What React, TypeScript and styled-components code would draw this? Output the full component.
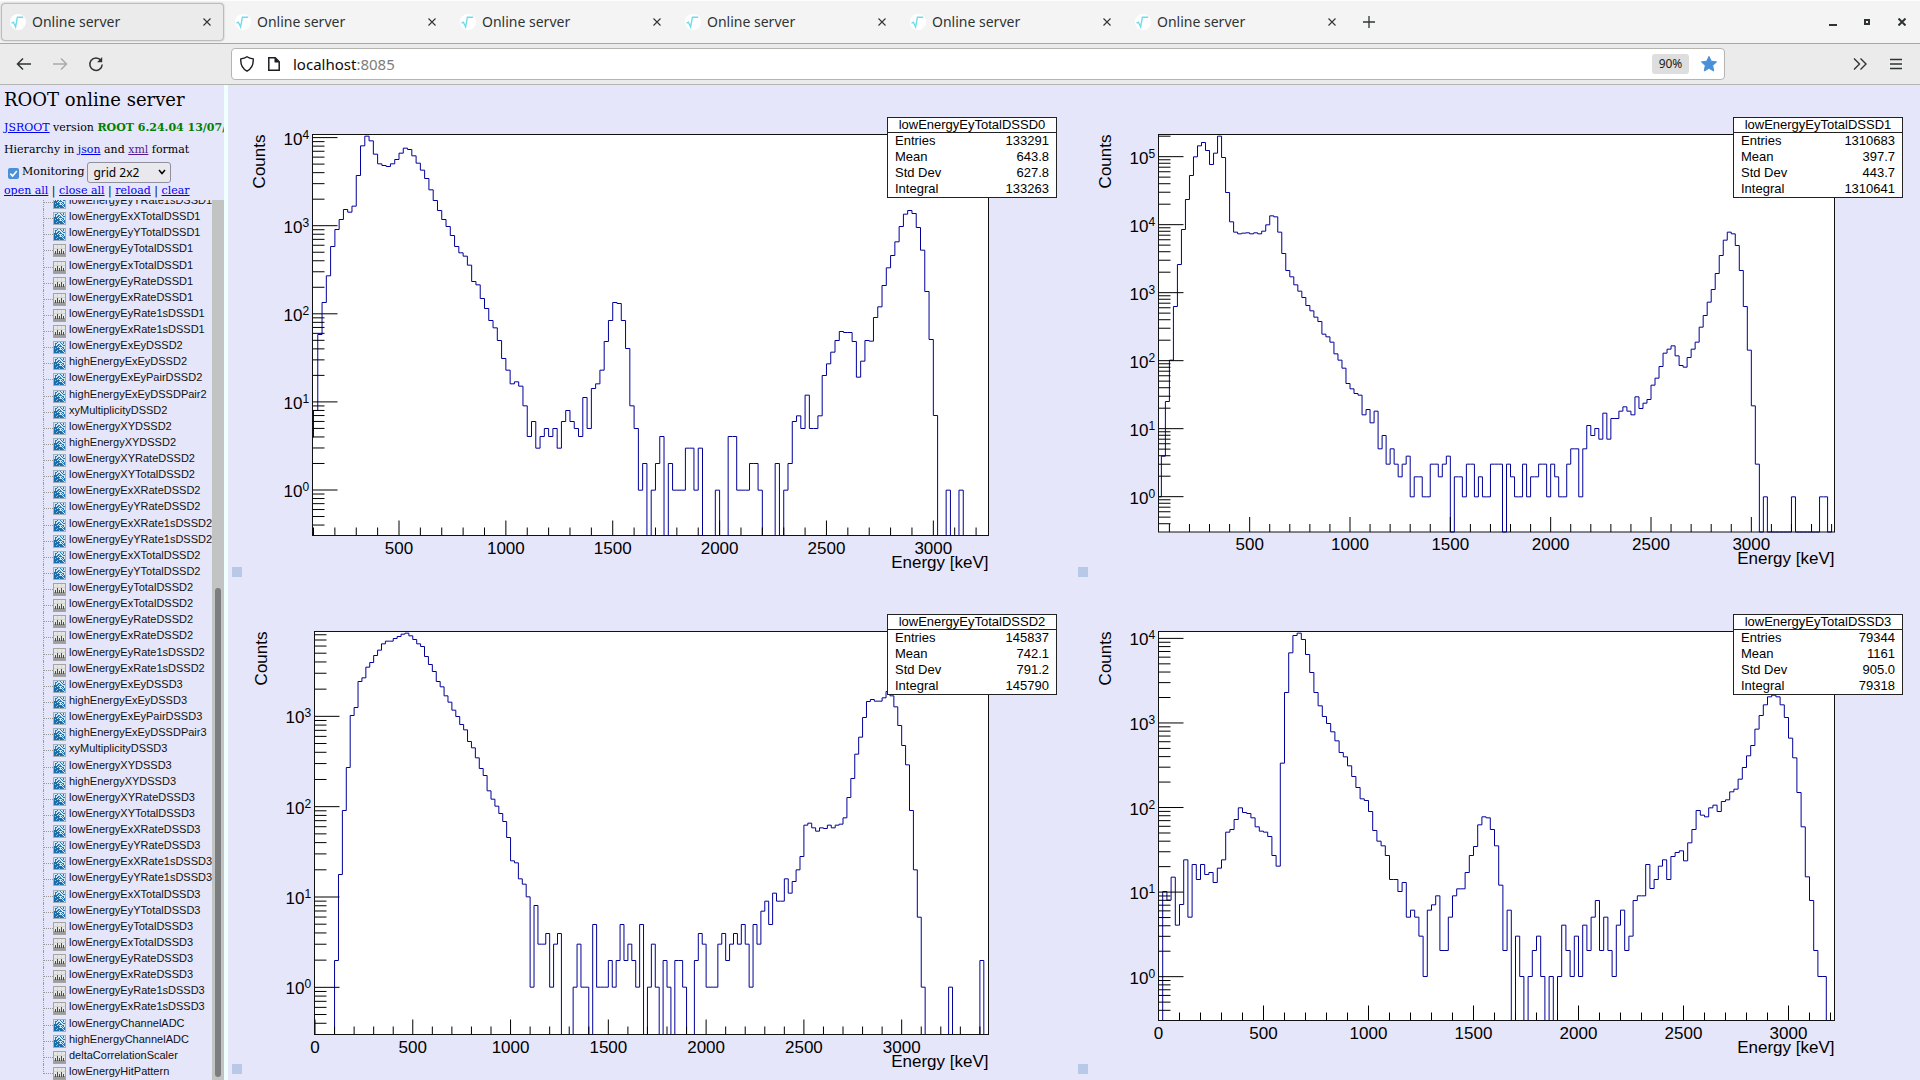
import React from "react";
import styled, { createGlobalStyle } from "styled-components";

const GlobalStyle = createGlobalStyle`
  html, body, #root { height: 100%; }
  body { margin: 0; background: #e6e6fa; overflow: hidden; }
  * { box-sizing: border-box; }
`;

const UI_FONT = `"Noto Sans", "Open Sans", sans-serif`;
const PLOT_FONT = `"Liberation Sans", Arial, sans-serif`;
const PAGE_FONT = `"DejaVu Serif", serif`;

/* ---------- browser chrome ---------- */

const Window = styled.div`
  display: flex;
  flex-direction: column;
  height: 100vh;
  font-family: ${UI_FONT};
  color: #2e3436;
`;

const TabBar = styled.div`
  display: flex;
  align-items: center;
  height: 44px;
  flex: none;
  background: #f4f4f4;
  border-top: 1px solid #fdfdfd;
  border-bottom: 1px solid #a8a8a6;
`;

const TabItem = styled.div<{ $active?: boolean }>`
  display: flex;
  align-items: center;
  gap: 6px;
  width: 223px;
  height: 38px;
  margin-left: 1px;
  margin-right: 1px;
  padding: 0 9px 0 8px;
  border-radius: 4px;
  border: 1px solid ${(p) => (p.$active ? "#bcbcc0" : "transparent")};
  background: ${(p) => (p.$active ? "#ebebeb" : "transparent")};
  box-shadow: ${(p) => (p.$active ? "0 0 2px #b4b4b8" : "none")};
`;

const TabTitle = styled.span`
  flex: 1;
  font-size: 14px;
  line-height: 20px;
`;

const IconButton = styled.button<{ $w?: number }>`
  display: flex;
  align-items: center;
  justify-content: center;
  width: ${(p) => p.$w ?? 36}px;
  height: 32px;
  padding: 0;
  border: 0;
  background: none;
  color: inherit;
`;

const WindowControls = styled.div`
  display: flex;
  margin-left: auto;
`;

const NavBar = styled.div`
  display: flex;
  align-items: center;
  height: 41px;
  flex: none;
  padding: 0 6px;
  background: #ebebeb;
  border-bottom: 1px solid #b4b4b0;
`;

const UrlBox = styled.div`
  display: flex;
  align-items: center;
  flex: 1;
  max-width: 1494px;
  height: 32px;
  padding: 0 7px;
  border: 1px solid #b4b4b0;
  border-radius: 4px;
  background: #fff;
`;

const NavButtons = styled.div`
  display: flex;
  width: 225px;
  flex: none;
`;

const Address = styled.div`
  flex: 1;
  margin-left: 13px;
  font-size: 15px;
  line-height: 24px;
  color: #7d7d7d;
  strong { font-weight: 400; color: #0c0c0d; }
`;

const DocIcon = styled.svg`
  margin-left: 13px;
`;

const ZoomBadge = styled.button`
  width: 37px;
  height: 20px;
  margin-right: 12px;
  padding: 0;
  border: 0;
  border-radius: 3px;
  background: #dedede;
  color: #1c1c1c;
  font-family: ${UI_FONT};
  font-size: 12px;
  line-height: 20px;
`;

const NavEnd = styled.div`
  display: flex;
  margin-left: auto;
`;

const Favicon = () => (
  <svg width="16" height="16" viewBox="0 0 16 16" aria-hidden="true">
    <circle cx="8" cy="8" r="8" fill="#fff" />
    <path d="M1.5 9.2 L3.4 8.3 L5.6 13 L7.4 3.2 L13.2 3.2" fill="none" stroke="#6fdcee" strokeWidth="1.4" />
  </svg>
);

const CloseGlyph = () => (
  <svg width="8" height="8" viewBox="0 0 8 8" aria-hidden="true">
    <path d="M.5 .5L7.500 7.500M7.500 .5L.5 7.500" stroke="#2e3436" strokeWidth="1.1" />
  </svg>
);

/* ---------- page ---------- */

const Page = styled.div`
  display: flex;
  flex: 1;
  min-height: 0;
  background: #e6e6fa;
  color: #000;
`;

const Sidebar = styled.aside`
  display: flex;
  flex-direction: column;
  width: 224px;
  flex: none;
  overflow: hidden;
  font-family: ${PAGE_FONT};
  font-size: 11px;
  line-height: 16px;
`;

const SidebarHead = styled.div`
  padding: 0 0 1px 4px;
  white-space: nowrap;
  a { color: #0000ee; }
`;

const Title = styled.h1`
  margin: 0;
  font-size: 18px;
  font-weight: 400;
  line-height: 30px;
`;

const Version = styled.p`
  margin: 5px 0 6px;
  b { color: #008000; }
`;

const Formats = styled.p`
  margin: 0 0 3px;
  a + a { color: #551a8b; }
`;

const Controls = styled.div`
  display: flex;
  align-items: center;
  height: 22px;
  padding-left: 4px;
`;

const Tick = styled.input`
  appearance: none;
  width: 11px;
  height: 11px;
  margin: 3px 3px 0 0;
  border-radius: 2px;
  background: #4a90d9
    url("data:image/svg+xml,%3Csvg xmlns='http://www.w3.org/2000/svg' viewBox='0 0 11 11'%3E%3Cpath d='M2.300 5.600L4.600 8L8.800 3' fill='none' stroke='white' stroke-width='1.600'/%3E%3C/svg%3E");
`;

const LayoutSelect = styled.select`
  appearance: none;
  width: 84px;
  height: 21px;
  margin-left: 3px;
  padding: 0 5px;
  border: 1px solid #8f8f9d;
  border-radius: 3px;
  background: #e9e9ed
    url("data:image/svg+xml,%3Csvg xmlns='http://www.w3.org/2000/svg' viewBox='0 0 8 6'%3E%3Cpath d='M1 1L4 4.500L7 1' fill='none' stroke='black' stroke-width='1.500'/%3E%3C/svg%3E")
    right 4px center / 8px 6px no-repeat;
  color: #000;
  font-family: ${UI_FONT};
  font-size: 12px;
`;

const TreeArea = styled.div`
  display: flex;
  flex: 1;
  min-height: 0;
`;

const TreeClip = styled.div`
  display: flex;
  align-items: flex-end;
  flex: 1;
  min-width: 0;
  overflow: hidden;
`;

const Tree = styled.ul`
  display: grid;
  grid-auto-rows: 1fr;
  width: 100%;
  height: 887px;
  flex: none;
  margin: 0;
  padding: 0 0 0 43px;
  list-style: none;
`;

const TreeRow = styled.li`
  display: flex;
  align-items: center;
  min-height: 0;
  svg { flex: none; margin-top: 3px; }
  a {
    margin-left: 3px;
    padding-bottom: 1px;
    color: #111;
    font-family: ${PLOT_FONT};
    font-size: 11px;
    line-height: 15px;
    white-space: nowrap;
    text-decoration: none;
  }
`;

const Branch = styled.span<{ $last: boolean }>`
  display: flex;
  align-items: ${(p) => (p.$last ? "flex-end" : "center")};
  align-self: ${(p) => (p.$last ? "flex-start" : "stretch")};
  height: ${(p) => (p.$last ? "60%" : "auto")};
  width: 10px;
  border-left: 1px dotted #999;
  &::after {
    content: "";
    flex: 1;
    margin-top: 3px;
    border-top: 1px dotted #999;
  }
`;

const ScrollTrack = styled.div`
  display: flex;
  flex-direction: column;
  justify-content: flex-end;
  width: 12px;
  padding: 3px;
  background: #c1c4c2;
`;

const ScrollThumb = styled.div`
  height: 56%;
  border-radius: 3px;
  background: #7b7d7e;
`;

const Splitter = styled.div`
  width: 4px;
  flex: none;
  background: #f0ffff;
`;

const PadGrid = styled.main`
  display: grid;
  grid-template: 1fr 1fr / 1fr 1fr;
  flex: 1;
  min-width: 0;
  padding-bottom: 1px;
`;

const Pad = styled.section`
  position: relative;
  min-width: 0;
  min-height: 0;
`;

const PadDrawing = styled.svg`
  display: block;
  width: 100%;
  height: 100%;
  font-family: ${PLOT_FONT};
  font-size: 17px;
`;

const StatsBox = styled.table`
  position: absolute;
  top: 32px;
  right: 17px;
  width: 170px;
  border: 1px solid #222;
  border-spacing: 0;
  background: #fff;
  font-family: ${PLOT_FONT};
  font-size: 13px;
  line-height: 15px;
  th { padding: 0 0 1px 7px; font-weight: 400; text-align: left; }
  td { padding: 0 7px 1px 0; text-align: right; }
  thead th {
    padding: 0;
    border-bottom: 1px solid #222;
    line-height: 14px;
    text-align: center;
  }
`;

/* ---------- tree ---------- */

const HistIcon1D = () => (
  <svg width="13" height="13" viewBox="0 0 13 13" aria-hidden="true">
    <rect x=".5" y=".5" width="12" height="12" fill="#e6e6e3" stroke="#a4a4a2" />
    <path d="M1 4.500H12M4.500 1V12M8.500 1V12" stroke="#d4d4d4" />
    <rect x="1" y="9" width="11" height="3" fill="#9c9c9c" />
    <path d="M2.500 10V7M4.500 10V5M6.500 10V7M8.500 10V5M10.500 10V7" stroke="#4c4c4c" strokeWidth="1" />
  </svg>
);

const HistIcon2D = () => (
  <svg width="13" height="13" viewBox="0 0 13 13" aria-hidden="true">
    <rect x=".5" y=".5" width="12" height="12" fill="#d4e8f4" stroke="#9fb0ba" />
    <path d="M1 5H4V7H7V9H9V12H1Z" fill="#1c6ea8" />
    <path
      d="M2 2.500H4M5 3.500H7M8 2.500H9M10 2.500H11M2 3.500H3M4 1.500H5M7 1.500H8M10 1.500H11M9 3.500H10M4 4.500H6M7 4.500H8M4 5.500H5M6 5.500H9M10 4.500H12M5 6.500H6M9 6.500H11M8 7.500H9M10 7.500H11M9 8.500H10M11 8.500H12M10 9.500H12M9 10.500H10M11 10.500H12M9 11.500H11M2 4.500H3"
      stroke="#2878b0"
    />
    <path d="M2 7.500H3M4 9.500H5M6 8.500H7M3 10.500H4M6 11.500H7" stroke="#8fc3e4" />
  </svg>
);

type Leaf = { name: string; twoD: boolean };

const two = (name: string): Leaf => ({ name, twoD: true });
const one = (name: string): Leaf => ({ name, twoD: false });

const totalsAndRates = (n: number): Leaf[] => [
  two(`lowEnergyExXTotalDSSD${n}`),
  two(`lowEnergyEyYTotalDSSD${n}`),
  one(`lowEnergyEyTotalDSSD${n}`),
  one(`lowEnergyExTotalDSSD${n}`),
  one(`lowEnergyEyRateDSSD${n}`),
  one(`lowEnergyExRateDSSD${n}`),
  one(`lowEnergyEyRate1sDSSD${n}`),
  one(`lowEnergyExRate1sDSSD${n}`),
];

const detector = (n: number): Leaf[] => [
  two(`lowEnergyExEyDSSD${n}`),
  two(`highEnergyExEyDSSD${n}`),
  two(`lowEnergyExEyPairDSSD${n}`),
  two(`highEnergyExEyDSSDPair${n}`),
  two(`xyMultiplicityDSSD${n}`),
  two(`lowEnergyXYDSSD${n}`),
  two(`highEnergyXYDSSD${n}`),
  two(`lowEnergyXYRateDSSD${n}`),
  two(`lowEnergyXYTotalDSSD${n}`),
  two(`lowEnergyExXRateDSSD${n}`),
  two(`lowEnergyEyYRateDSSD${n}`),
  two(`lowEnergyExXRate1sDSSD${n}`),
  two(`lowEnergyEyYRate1sDSSD${n}`),
  ...totalsAndRates(n),
];

const leaves: Leaf[] = [
  two("lowEnergyEyYRate1sDSSD1"),
  ...totalsAndRates(1),
  ...detector(2),
  ...detector(3),
  two("lowEnergyChannelADC"),
  two("highEnergyChannelADC"),
  one("deltaCorrelationScaler"),
  one("lowEnergyHitPattern"),
];

/* ---------- histograms ---------- */

type Hist = {
  name: string;
  stats: [string, string][];
  frame: { left: number; right: number; top: number; bottom: number };
  /* position of 0 keV and width of 1 keV */
  x0: number;
  perKeV: number;
  firstLabel: number;
  /* position of one count and height of a decade */
  y0: number;
  decade: number;
  /* left edge of the first bin; every bin is 20 keV wide */
  start: number;
  /* bin tops in thirds of a unit below originY; 0 is an empty bin */
  originY: number;
  tops: number[];
};

const hists: Hist[] = [
  {
    name: "lowEnergyEyTotalDSSD0",
    stats: [["Entries", "133291"], ["Mean", "643.8"], ["Std Dev", "627.8"], ["Integral", "133263"]],
    frame: { left: 84.5, right: 760.5, top: 49.5, bottom: 450.5 },
    x0: 64.13, perKeV: 0.213733, firstLabel: 500, y0: 405, decade: 88.1, start: 80, originY: 25,
    tops: [
      981, 901, 673, 577, 497, 409, 358, 328, 298, 306, 288, 196, 107, 78, 92, 132, 161, 166, 169, 161, 148,
      129, 114, 118, 137, 159, 180, 205, 239, 271, 301, 328, 349, 376, 409, 428, 438, 465, 514, 524, 565,
      595, 631, 653, 691, 745, 780, 821, 815, 828, 887, 979, 934, 1014, 979, 955, 979, 955, 1014, 934, 901,
      934, 955, 979, 862, 955, 835, 821, 780, 694, 631, 577, 580, 631, 715, 887, 955, 1140, 1060, 0, 1140,
      1060, 979, 0, 1060, 1140, 1140, 1140, 1014, 1014, 1140, 1014, 0, 0, 0, 1140, 0, 0, 979, 979, 1140, 1140,
      1140, 1060, 1060, 1140, 0, 0, 0, 1060, 0, 1140, 1060, 934, 917, 955, 855, 955, 955, 917, 796, 761, 726,
      691, 664, 667, 667, 694, 801, 753, 691, 693, 622, 590, 526, 473, 436, 395, 349, 312, 301, 310, 352,
      420, 544, 688, 916, 0, 0, 1140, 0, 0, 1140, 0,
    ],
  },
  {
    name: "lowEnergyEyTotalDSSD1",
    stats: [["Entries", "1310683"], ["Mean", "397.7"], ["Std Dev", "443.7"], ["Integral", "1310641"]],
    frame: { left: 84.5, right: 760.5, top: 49.5, bottom: 447 },
    x0: 75.33, perKeV: 0.200667, firstLabel: 500, y0: 411.67, decade: 68, start: 40, originY: 25,
    tops: [
      1160, 1038, 874, 750, 589, 463, 358, 268, 196, 140, 107, 97, 121, 163, 129, 78, 142, 247, 335, 366, 371,
      369, 368, 371, 368, 371, 363, 344, 317, 320, 366, 430, 481, 500, 524, 543, 562, 586, 602, 621, 634, 672,
      680, 696, 731, 750, 774, 820, 836, 850, 855, 914, 898, 938, 903, 1016, 976, 1062, 1016, 1062, 1100, 1062,
      1038, 1160, 1100, 1100, 1160, 1160, 1062, 1062, 1100, 1062, 1038, 0, 1100, 1100, 1160, 1062, 1062, 1160,
      1100, 1160, 1160, 1062, 1062, 1062, 0, 1062, 1100, 1160, 1160, 1062, 1160, 1100, 1100, 1062, 1062, 1160,
      1062, 1100, 1160, 1160, 1062, 1016, 1016, 1160, 1016, 946, 976, 955, 987, 909, 987, 925, 925, 903, 890,
      903, 914, 860, 895, 879, 868, 825, 804, 769, 729, 717, 707, 737, 766, 771, 742, 717, 696, 651, 616, 576,
      538, 490, 436, 390, 366, 371, 406, 481, 589, 720, 887, 1062, 0, 1160, 0, 0, 0, 0, 0, 0, 1160, 0, 0, 0, 0,
      0, 0, 1160, 1160, 0,
    ],
  },
  {
    name: "lowEnergyEyTotalDSSD2",
    stats: [["Entries", "145837"], ["Mean", "742.1"], ["Std Dev", "791.2"], ["Integral", "145790"]],
    frame: { left: 86.5, right: 760.5, top: 49.5, bottom: 452.5 },
    x0: 87, perKeV: 0.19556, firstLabel: 0, y0: 405.33, decade: 90.33, start: 0, originY: 18,
    tops: [
      0, 0, 0, 0, 0, 1081, 823, 631, 502, 346, 322, 244, 233, 201, 187, 166, 150, 131, 123, 123, 115, 109, 102,
      99, 107, 118, 131, 139, 169, 193, 214, 244, 260, 287, 306, 330, 349, 373, 389, 424, 443, 473, 505, 526,
      572, 597, 618, 640, 664, 712, 782, 788, 836, 852, 890, 1161, 916, 1032, 1032, 1000, 1161, 1032, 1000, 0,
      0, 0, 1161, 1032, 1161, 1161, 0, 973, 1161, 1161, 1161, 1081, 1161, 1081, 973, 1081, 1032, 1081, 1161,
      973, 0, 1161, 1032, 1161, 0, 1081, 1161, 0, 1081, 1081, 1161, 0, 0, 1081, 1000, 1032, 1161, 1161, 1161,
      1032, 1000, 1081, 1032, 1000, 1032, 973, 1032, 1161, 973, 1032, 933, 903, 973, 879, 903, 903, 836, 879,
      844, 809, 769, 675, 669, 683, 693, 683, 685, 675, 683, 675, 672, 653, 592, 535, 462, 411, 352, 304, 298,
      303, 303, 293, 274, 287, 320, 376, 436, 494, 631, 809, 951, 1161, 0, 0, 0, 0, 0, 0, 1161, 0, 0, 0, 0, 0,
      0, 0, 1081, 0,
    ],
  },
  {
    name: "lowEnergyEyTotalDSSD3",
    stats: [["Entries", "79344"], ["Mean", "1161"], ["Std Dev", "905.0"], ["Integral", "79318"]],
    frame: { left: 84.5, right: 760.5, top: 49.5, bottom: 438.5 },
    x0: 84.5, perKeV: 0.21, firstLabel: 0, y0: 394.67, decade: 84.57, start: 0, originY: 18,
    tops: [
      0, 874, 900, 831, 975, 913, 779, 951, 793, 838, 793, 823, 817, 847, 804, 779, 696, 688, 658, 623, 637, 640,
      653, 680, 693, 696, 709, 766, 798, 489, 277, 158, 106, 99, 118, 163, 217, 277, 317, 349, 370, 395, 422,
      457, 470, 497, 529, 562, 596, 601, 634, 691, 723, 737, 766, 838, 838, 874, 847, 951, 930, 951, 1008, 1129,
      930, 914, 887, 1051, 1051, 951, 887, 866, 866, 817, 766, 739, 674, 650, 653, 688, 737, 855, 1051, 930, 0,
      1008, 1129, 0, 1129, 1051, 1008, 1129, 0, 1129, 0, 1129, 975, 1051, 1129, 1008, 1129, 975, 1051, 951, 901,
      1051, 951, 1051, 1129, 975, 930, 1051, 1008, 901, 887, 887, 793, 865, 838, 798, 779, 838, 769, 757, 752,
      782, 728, 688, 631, 645, 650, 623, 615, 634, 604, 599, 575, 567, 537, 502, 467, 436, 387, 346, 314, 290,
      285, 290, 314, 352, 414, 473, 577, 680, 830, 901, 1051, 1129, 1129, 0,
    ],
  },
];

function tracePath(h: Hist) {
  const { left, bottom } = h.frame;
  const xAt = (e: number) => Math.max(left, h.x0 + e * h.perKeV).toFixed(2);
  const yAt = (t: number) => (t === 0 ? bottom : h.originY + (t + 0.5) / 3).toFixed(2);
  let d = `M${xAt(h.start)} ${yAt(h.tops[0])}`;
  h.tops.forEach((t, i) => {
    d += `V${yAt(t)}H${xAt(h.start + 20 * (i + 1))}`;
  });
  return d;
}

function axisTicks(h: Hist) {
  const { left, right, top, bottom } = h.frame;
  let d = "";
  for (let e = 0; e <= 3500; e += 100) {
    const x = h.x0 + e * h.perKeV;
    if (x < left - 1 || x > right) continue;
    d += `M${x.toFixed(2)} ${bottom}v${e % 500 === 0 ? -15 : -8}`;
  }
  const exponents: { p: number; y: number }[] = [];
  for (let p = -1; p <= 5; p++) {
    for (let m = 1; m < 10; m++) {
      const y = h.y0 - h.decade * (p + Math.log10(m));
      if (y < top || y > bottom) continue;
      d += `M${left} ${y.toFixed(2)}h${m === 1 ? 25 : 12}`;
      if (m === 1) exponents.push({ p, y });
    }
  }
  return { d, exponents };
}

function HistPad({ hist }: { hist: Hist }) {
  const { left, right, top, bottom } = hist.frame;
  const { d, exponents } = axisTicks(hist);
  const labels: number[] = [];
  for (let e = hist.firstLabel; e <= 3000; e += 500) labels.push(e);
  return (
    <Pad>
      <PadDrawing viewBox="0 0 846 497" preserveAspectRatio="xMaxYMin meet" role="img" aria-label={hist.name}>
        <rect x={left} y={top} width={right - left} height={bottom - top} fill="#fff" />
        <path d={tracePath(hist)} fill="none" stroke="#000099" />
        <path d={d} stroke="#000" />
        <rect x={left} y={top} width={right - left} height={bottom - top} fill="none" stroke="#111" />
        {exponents.map(({ p, y }) => (
          <text key={p} x={left - 29} y={Math.round(y + 7)}>
            10
            <tspan dy="-6" fontSize="12">{p}</tspan>
          </text>
        ))}
        {labels.map((e) => (
          <text key={e} x={hist.x0 + e * hist.perKeV} y={bottom + 18} textAnchor="middle">{e}</text>
        ))}
        <text x={right} y={Math.round(bottom + 32)} textAnchor="end">Energy [keV]</text>
        <text transform={`translate(${left - 48} ${top}) rotate(-90)`} textAnchor="end">Counts</text>
        <rect x="4" y="482" width="10" height="10" fill="#b8c9e8" />
      </PadDrawing>
      <StatsBox>
        <thead>
          <tr><th colSpan={2}>{hist.name}</th></tr>
        </thead>
        <tbody>
          {hist.stats.map(([k, v]) => (
            <tr key={k}><th scope="row">{k}</th><td>{v}</td></tr>
          ))}
        </tbody>
      </StatsBox>
    </Pad>
  );
}

export default function App() {
  return (
    <Window>
      <GlobalStyle />
      <TabBar>
        {[0, 1, 2, 3, 4, 5].map((i) => (
          <TabItem key={i} $active={i === 0}>
            <Favicon />
            <TabTitle>Online server</TabTitle>
            <IconButton $w={14} aria-label="Close tab"><CloseGlyph /></IconButton>
          </TabItem>
        ))}
        <IconButton $w={38} aria-label="New tab">
          <svg width="12" height="12" viewBox="0 0 12 12"><path d="M6 0V12M0 6H12" stroke="#2e3436" strokeWidth="1.3" /></svg>
        </IconButton>
        <WindowControls>
          <IconButton $w={34} aria-label="Minimize">
            <svg width="8" height="8" viewBox="0 0 8 8"><path d="M0 7H8" stroke="#2e3436" strokeWidth="2" /></svg>
          </IconButton>
          <IconButton $w={34} aria-label="Restore">
            <svg width="6" height="6" viewBox="0 0 6 6"><rect x="1" y="1" width="4" height="4" fill="none" stroke="#2e3436" strokeWidth="2" /></svg>
          </IconButton>
          <IconButton $w={36} aria-label="Close window">
            <svg width="8" height="8" viewBox="0 0 8 8"><path d="M.5 .5L7.500 7.500M7.500 .5L.5 7.500" stroke="#2e3436" strokeWidth="2" /></svg>
          </IconButton>
        </WindowControls>
      </TabBar>

      <NavBar>
        <NavButtons>
          <IconButton aria-label="Back">
            <svg width="16" height="14" viewBox="0 0 16 14"><path d="M15 7H1.500M7 1.500L1.500 7L7 12.500" fill="none" stroke="#2e3436" strokeWidth="1.500" /></svg>
          </IconButton>
          <IconButton aria-label="Forward">
            <svg width="16" height="14" viewBox="0 0 16 14"><path d="M1 7H14.500M9 1.500L14.500 7L9 12.500" fill="none" stroke="#a9abac" strokeWidth="1.500" /></svg>
          </IconButton>
          <IconButton aria-label="Reload">
            <svg width="16" height="16" viewBox="0 0 16 16">
              <path d="M13 4.500A6.200 6.200 0 1 0 14.200 8.500" fill="none" stroke="#2e3436" strokeWidth="1.500" />
              <path d="M14.200 1V6.200H9Z" fill="#2e3436" />
            </svg>
          </IconButton>
        </NavButtons>
        <UrlBox>
          <svg width="16" height="16" viewBox="0 0 16 16" aria-hidden="true">
            <path d="M8 .8C9.800 2.100 12 2.700 14.200 2.900C14.600 8.500 12.300 12.900 8 15.200C3.700 12.900 1.400 8.500 1.800 2.900C4 2.700 6.200 2.100 8 .8Z" fill="none" stroke="#1c1c1c" strokeWidth="1.400" />
          </svg>
          <DocIcon width="12" height="14" viewBox="0 0 12 14" aria-hidden="true">
            <path d="M.8 .8H7.200L11.200 4.800V13.200H.8Z" fill="none" stroke="#1c1c1c" strokeWidth="1.500" />
            <path d="M6.500 .5V5.500H11.500Z" fill="#1c1c1c" />
          </DocIcon>
          <Address><strong>localhost</strong>:8085</Address>
          <ZoomBadge>90%</ZoomBadge>
          <svg width="16" height="16" viewBox="0 0 16 16" aria-hidden="true">
            <path d="M8 .4L10.300 5.200L15.600 5.900L11.700 9.500L12.700 15L8 12.300L3.300 15L4.300 9.500L.4 5.900L5.700 5.200Z" fill="#4a90d9" stroke="#4a90d9" strokeLinejoin="round" />
          </svg>
        </UrlBox>
        <NavEnd>
          <IconButton aria-label="More tools">
            <svg width="14" height="12" viewBox="0 0 14 12"><path d="M1 .5L6.500 6L1 11.500M7.500 .5L13 6L7.500 11.500" fill="none" stroke="#2e3436" strokeWidth="1.400" /></svg>
          </IconButton>
          <IconButton aria-label="Menu">
            <svg width="12" height="12" viewBox="0 0 12 12"><path d="M0 1.500H12M0 6H12M0 10.500H12" stroke="#2e3436" strokeWidth="1.300" /></svg>
          </IconButton>
        </NavEnd>
      </NavBar>

      <Page>
        <Sidebar>
          <SidebarHead>
            <Title>ROOT online server</Title>
            <Version><a href="#jsroot">JSROOT</a> version <b>ROOT 6.24.04 13/07/2021</b></Version>
            <Formats>Hierarchy in <a href="#json">json</a> and <a href="#xml">xml</a> format</Formats>
            <Controls>
              <Tick type="checkbox" id="monitoring" defaultChecked />
              <label htmlFor="monitoring">Monitoring</label>
              <LayoutSelect aria-label="Layout" defaultValue="grid 2x2">
                <option>grid 2x2</option>
              </LayoutSelect>
            </Controls>
            <div>
              <a href="#open">open all</a> | <a href="#close">close all</a> | <a href="#reload">reload</a> | <a href="#clear">clear</a>
            </div>
          </SidebarHead>
          <TreeArea>
            <TreeClip>
              <Tree>
                {leaves.map((leaf, i) => (
                  <TreeRow key={i}>
                    <Branch $last={i === leaves.length - 1} />
                    {leaf.twoD ? <HistIcon2D /> : <HistIcon1D />}
                    <a href={`#${leaf.name}`}>{leaf.name}</a>
                  </TreeRow>
                ))}
              </Tree>
            </TreeClip>
            <ScrollTrack><ScrollThumb /></ScrollTrack>
          </TreeArea>
        </Sidebar>
        <Splitter />
        <PadGrid>
          {hists.map((h) => <HistPad key={h.name} hist={h} />)}
        </PadGrid>
      </Page>
    </Window>
  );
}
